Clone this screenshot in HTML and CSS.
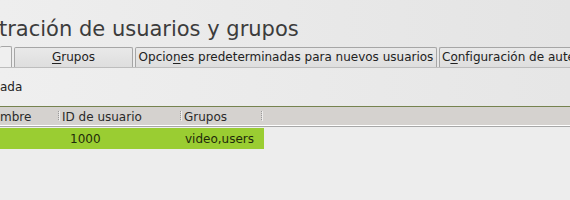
FILE: index.html
```html
<!DOCTYPE html>
<html lang="es">
<head>
<meta charset="utf-8">
<link rel="stylesheet" href="styles.css">
</head>
<body>
<div class="window">
  <h1 class="title">tración de usuarios y grupos</h1>
  <div class="tabs">
    <div class="tab active"></div>
    <div class="tab t-grupos"><span><u>G</u>rupos</span></div>
    <div class="tab t-opciones"><span>Opcio<u>n</u>es predeterminadas para nuevos usuarios</span></div>
    <div class="tab t-config"><span>C<u>o</u>nfiguración de aute</span></div>
  </div>
  <div class="page">
    <div class="label">ada</div>
    <div class="table">
      <div class="thead">
        <div class="th c1">mbre</div>
        <div class="th c2">ID de usuario</div>
        <div class="th c3">Grupos</div>
        <div class="th c4"></div>
      </div>
      <div class="trow">
        <div class="td c1"></div>
        <div class="td c2 num">1000</div>
        <div class="td c3">video,users</div>
      </div>
    </div>
  </div>
</div>
</body>
</html>
```
FILE: styles.css
```css
* { box-sizing: border-box; }
html, body { margin: 0; padding: 0; }
body {
  width: 570px;
  height: 200px;
  overflow: hidden;
  background: #ededed;
  font-family: "DejaVu Sans", sans-serif;
  color: #222;
}
.window {
  height: 200px;
  background: linear-gradient(90deg, #eeeeee 0%, #e4e4e4 100%);
  display: flex;
  flex-direction: column;
  overflow: hidden;
}
.window > * { flex-shrink: 0; }
.title {
  margin: 0;
  padding: 16px 0 0 0;
  height: 46px;
  font-size: 21px;
  font-weight: normal;
  color: #3c3c3c;
  line-height: 26px;
  white-space: nowrap;
  margin-left: -1px;
}
.tabs {
  display: flex;
  height: 21px;
  align-items: flex-end;
  gap: 2px;
  white-space: nowrap;
  overflow: hidden;
}
.tab {
  height: 20px;
  border: 1px solid #a6a6a6;
  border-bottom: none;
  border-radius: 2px 2px 0 0;
  background: linear-gradient(#e9e9e9, #dedede);
  font-size: 12px;
  line-height: 19px;
  color: #222;
  display: flex;
  justify-content: center;
  flex-shrink: 0;
}
.tab u { text-decoration-thickness: 1px; text-underline-offset: 2px; }
.tab.active {
  width: 12px;
  height: 21px;
  border-left: none;
  background: #efefef;
}
.t-grupos { width: 119px; }
.t-opciones { width: 302px; }
.t-config { width: 140px; justify-content: flex-start; padding-left: 2px; border-right: none; }
.page {
  flex: 1 1 auto;
  background: linear-gradient(90deg, #efefef 0%, #e6e6e6 100%);
  border-top: 1px solid #bdbdbd;
  padding-top: 11px;
  overflow: hidden;
}
.label {
  font-size: 12px;
  line-height: 16px;
  height: 27px;
  color: #222;
}
.table {
  border-top: 1px solid #76834f;
  background: #ededed;
  height: 100px;
}
.thead {
  display: flex;
  height: 19px;
  background: #d5d2cf;
  border-bottom: 1px solid #fff;
  box-shadow: 0 1px 0 #a8a8a8;
  font-size: 12px;
  line-height: 20px;
}
.th {
  position: relative;
  padding-left: 4px;
  color: #2a2a2a;
}
.th.c1 { width: 58px; padding-left: 0; }
.th.c2 { width: 122px; }
.th.c3 { width: 81px; }
.th.c2::before, .th.c3::before, .th.c4::before {
  content: "";
  position: absolute;
  left: 0;
  top: 4px;
  width: 1px;
  height: 10px;
  background: repeating-linear-gradient(#9a9a9a 0 1px, transparent 1px 2px);
  box-shadow: 1px 0 0 rgba(255,255,255,0.6);
}
.th.c4 { flex: 1; }
.trow {
  display: flex;
  margin-top: 2px;
  height: 21px;
  width: 264px;
  background: #9acd32;
  font-size: 12px;
  line-height: 22px;
  color: #1f2a0a;
}
.td.c1 { width: 58px; }
.td.c2 { width: 122px; padding-left: 12px; }
.td.c3 { width: 84px; padding-left: 5px; }
```
